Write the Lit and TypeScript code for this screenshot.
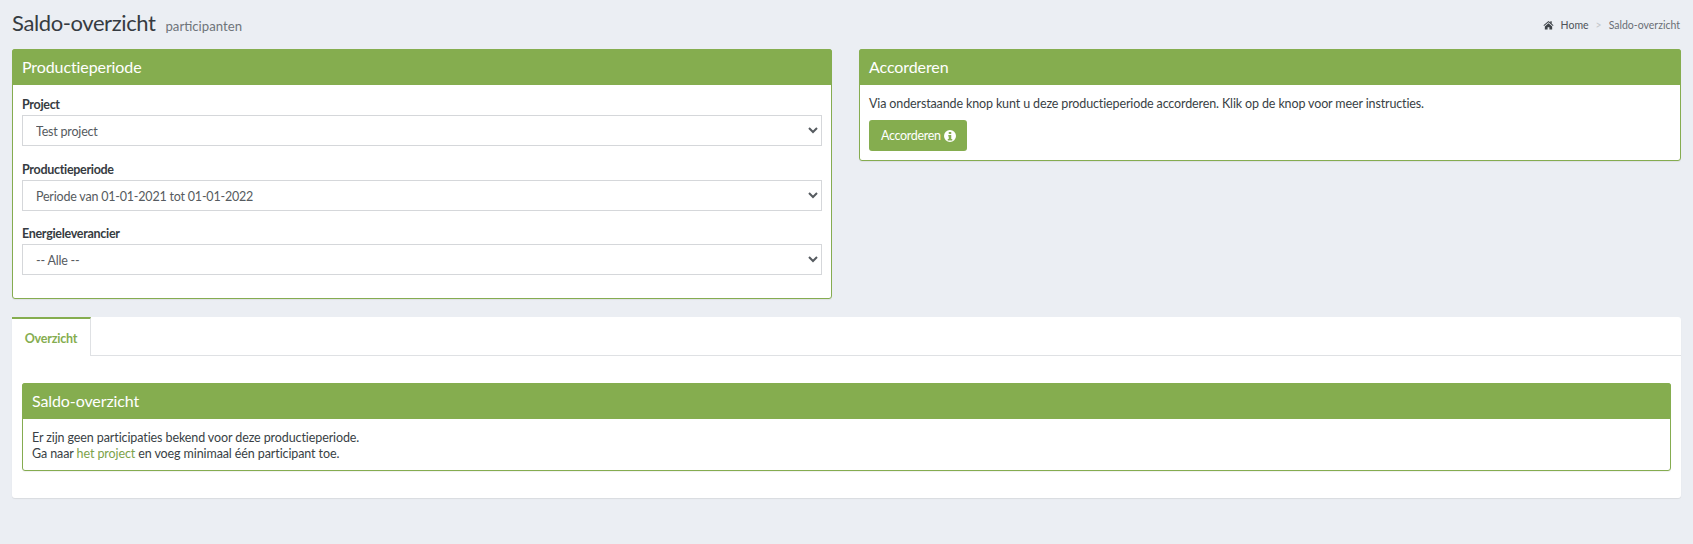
import { LitElement, html, css } from "lit";
import { customElement } from "lit/decorators.js";

@customElement("app-root")
export class AppRoot extends LitElement {
  static styles = css`
    :host {
      display: block;
      min-height: 544px;
      background: #ebeef3;
      font-family: "Lato", "Noto Sans", sans-serif;
      font-size: 12.5px;
      letter-spacing: -0.13px;
      color: #393f45;
      box-sizing: border-box;
      padding: 0 12px;
    }
    * { box-sizing: border-box; }
    .top {
      height: 49px;
      display: flex;
      align-items: flex-start;
      justify-content: space-between;
    }
    .title { display: flex; align-items: baseline; gap: 10px; padding-top: 8px; }
    h1 { margin: 0; font-size: 22px; letter-spacing: -0.4px; font-weight: 400; line-height: 30px; color: #363b41; }
    .sub { font-size: 13.2px; letter-spacing: 0; color: #6f747a; }
    .crumbs {
      display: flex;
      align-items: center;
      font-size: 10.5px;
      letter-spacing: 0;
      font-weight: 400;
      color: #4f5459;
      padding: 18px 1px 0 0;
      height: 32px;
    }
    .crumbs svg { width: 11px; height: 10px; fill: #3d4247; margin-right: 7px; }
    .crumbs .sep { color: #c4c7cb; margin: 0 7px; }
    .crumbs .cur { color: #6a6f75; }
    .cols { display: grid; grid-template-columns: 820px 822px; gap: 27px; align-items: start; }
    .box {
      background: #fff;
      border: 1px solid #85ac50;
      border-radius: 3px;
      box-shadow: 0 1px 1px rgba(0, 0, 0, 0.06);
    }
    .box-head {
      background: #85ad4f;
      color: #fff;
      height: 36px;
      margin: -1px -1px 0;
      padding: 0 10px;
      border-radius: 3px 3px 0 0;
      font-size: 16px;
      letter-spacing: -0.1px;
      line-height: 36px;
    }
    .box-body { padding: 9px 9px 23px; }
    label {
      display: block;
      font-weight: 700;
      padding-top: 2px;
      line-height: 18px;
      letter-spacing: -0.3px;
      color: #363b41;
    }
    .field { margin-bottom: 12.5px; }
    .field:last-child { margin-bottom: 0; }
    select {
      display: block;
      width: 100%;
      height: 31px;
      margin-top: 1px;
      border: 1px solid #d5d7da;
      background: #fff;
      border-radius: 0;
      padding: 2px 9px 0;
      font: inherit;
      letter-spacing: -0.2px;
      color: #565b60;
      outline: none;
    }
    .acc { padding: 10px 9px 9px; }
    .acc p { margin: 0 0 7px; line-height: 18px; }
    .btn {
      display: inline-flex;
      align-items: center;
      gap: 3px;
      height: 31px;
      padding: 0 11px 0 12px;
      background: #85ad4f;
      border: 0;
      border-radius: 3px;
      color: #fff;
      font: inherit;
      letter-spacing: -0.33px;
    }
    .btn svg { width: 12px; height: 12px; fill: #fff; }
    .tabs {
      margin-top: 18px;
      background: #fff;
      border-radius: 3px;
      box-shadow: 0 1px 1px rgba(0, 0, 0, 0.08);
      height: 181px;
    }
    .tabbar { height: 39px; border-bottom: 1px solid #dfe1e4; display: flex; }
    .tab {
      width: 79px;
      height: 39px;
      border-top: 2px solid #85ad4f;
      border-right: 1px solid #dfe1e4;
      background: #fff;
      color: #85ad4f;
      font-weight: 700;
      letter-spacing: -0.2px;
      line-height: 39px;
      text-align: center;
    }
    .pane { padding: 27px 10px 0; }
    .pane .body { padding: 11px 9px 8px; line-height: 16px; letter-spacing: -0.1px; }
    .pane a { color: #7ca24a; text-decoration: none; }
  `;

  render() {
    return html`
      <div class="top">
        <div class="title"><h1>Saldo-overzicht</h1><span class="sub">participanten</span></div>
        <div class="crumbs">
          <svg viewBox="0 0 24 20"><path d="M12 1 1 10.5l1.4 1.6L12 3.8l9.6 8.3 1.4-1.6L19 7V2h-3v2.4zM4 13v7h6v-5h4v5h6v-7l-8-7z"/></svg>
          <span>Home</span><span class="sep">&gt;</span><span class="cur">Saldo-overzicht</span>
        </div>
      </div>
      <div class="cols">
        <section class="box">
          <div class="box-head">Productieperiode</div>
          <div class="box-body">
            <div class="field"><label>Project</label><select><option>Test project</option></select></div>
            <div class="field"><label>Productieperiode</label><select><option>Periode van 01-01-2021 tot 01-01-2022</option></select></div>
            <div class="field"><label>Energieleverancier</label><select><option>-- Alle --</option></select></div>
          </div>
        </section>
        <section class="box">
          <div class="box-head">Accorderen</div>
          <div class="acc">
            <p>Via onderstaande knop kunt u deze productieperiode accorderen. Klik op de knop voor meer instructies.</p>
            <button class="btn">Accorderen
              <svg viewBox="0 0 24 24"><path fill-rule="evenodd" d="M12 0a12 12 0 1 0 0 24 12 12 0 0 0 0-24zM9.5 4h5v4h-5zM8.5 10h6v8h2v3h-9v-3h2v-5h-1z"/></svg>
            </button>
          </div>
        </section>
      </div>
      <div class="tabs">
        <div class="tabbar"><div class="tab">Overzicht</div></div>
        <div class="pane">
          <section class="box">
            <div class="box-head">Saldo-overzicht</div>
            <div class="body">
              Er zijn geen participaties bekend voor deze productieperiode.<br />
              Ga naar <a href="#">het project</a> en voeg minimaal één participant toe.
            </div>
          </section>
        </div>
      </div>
    `;
  }
}
